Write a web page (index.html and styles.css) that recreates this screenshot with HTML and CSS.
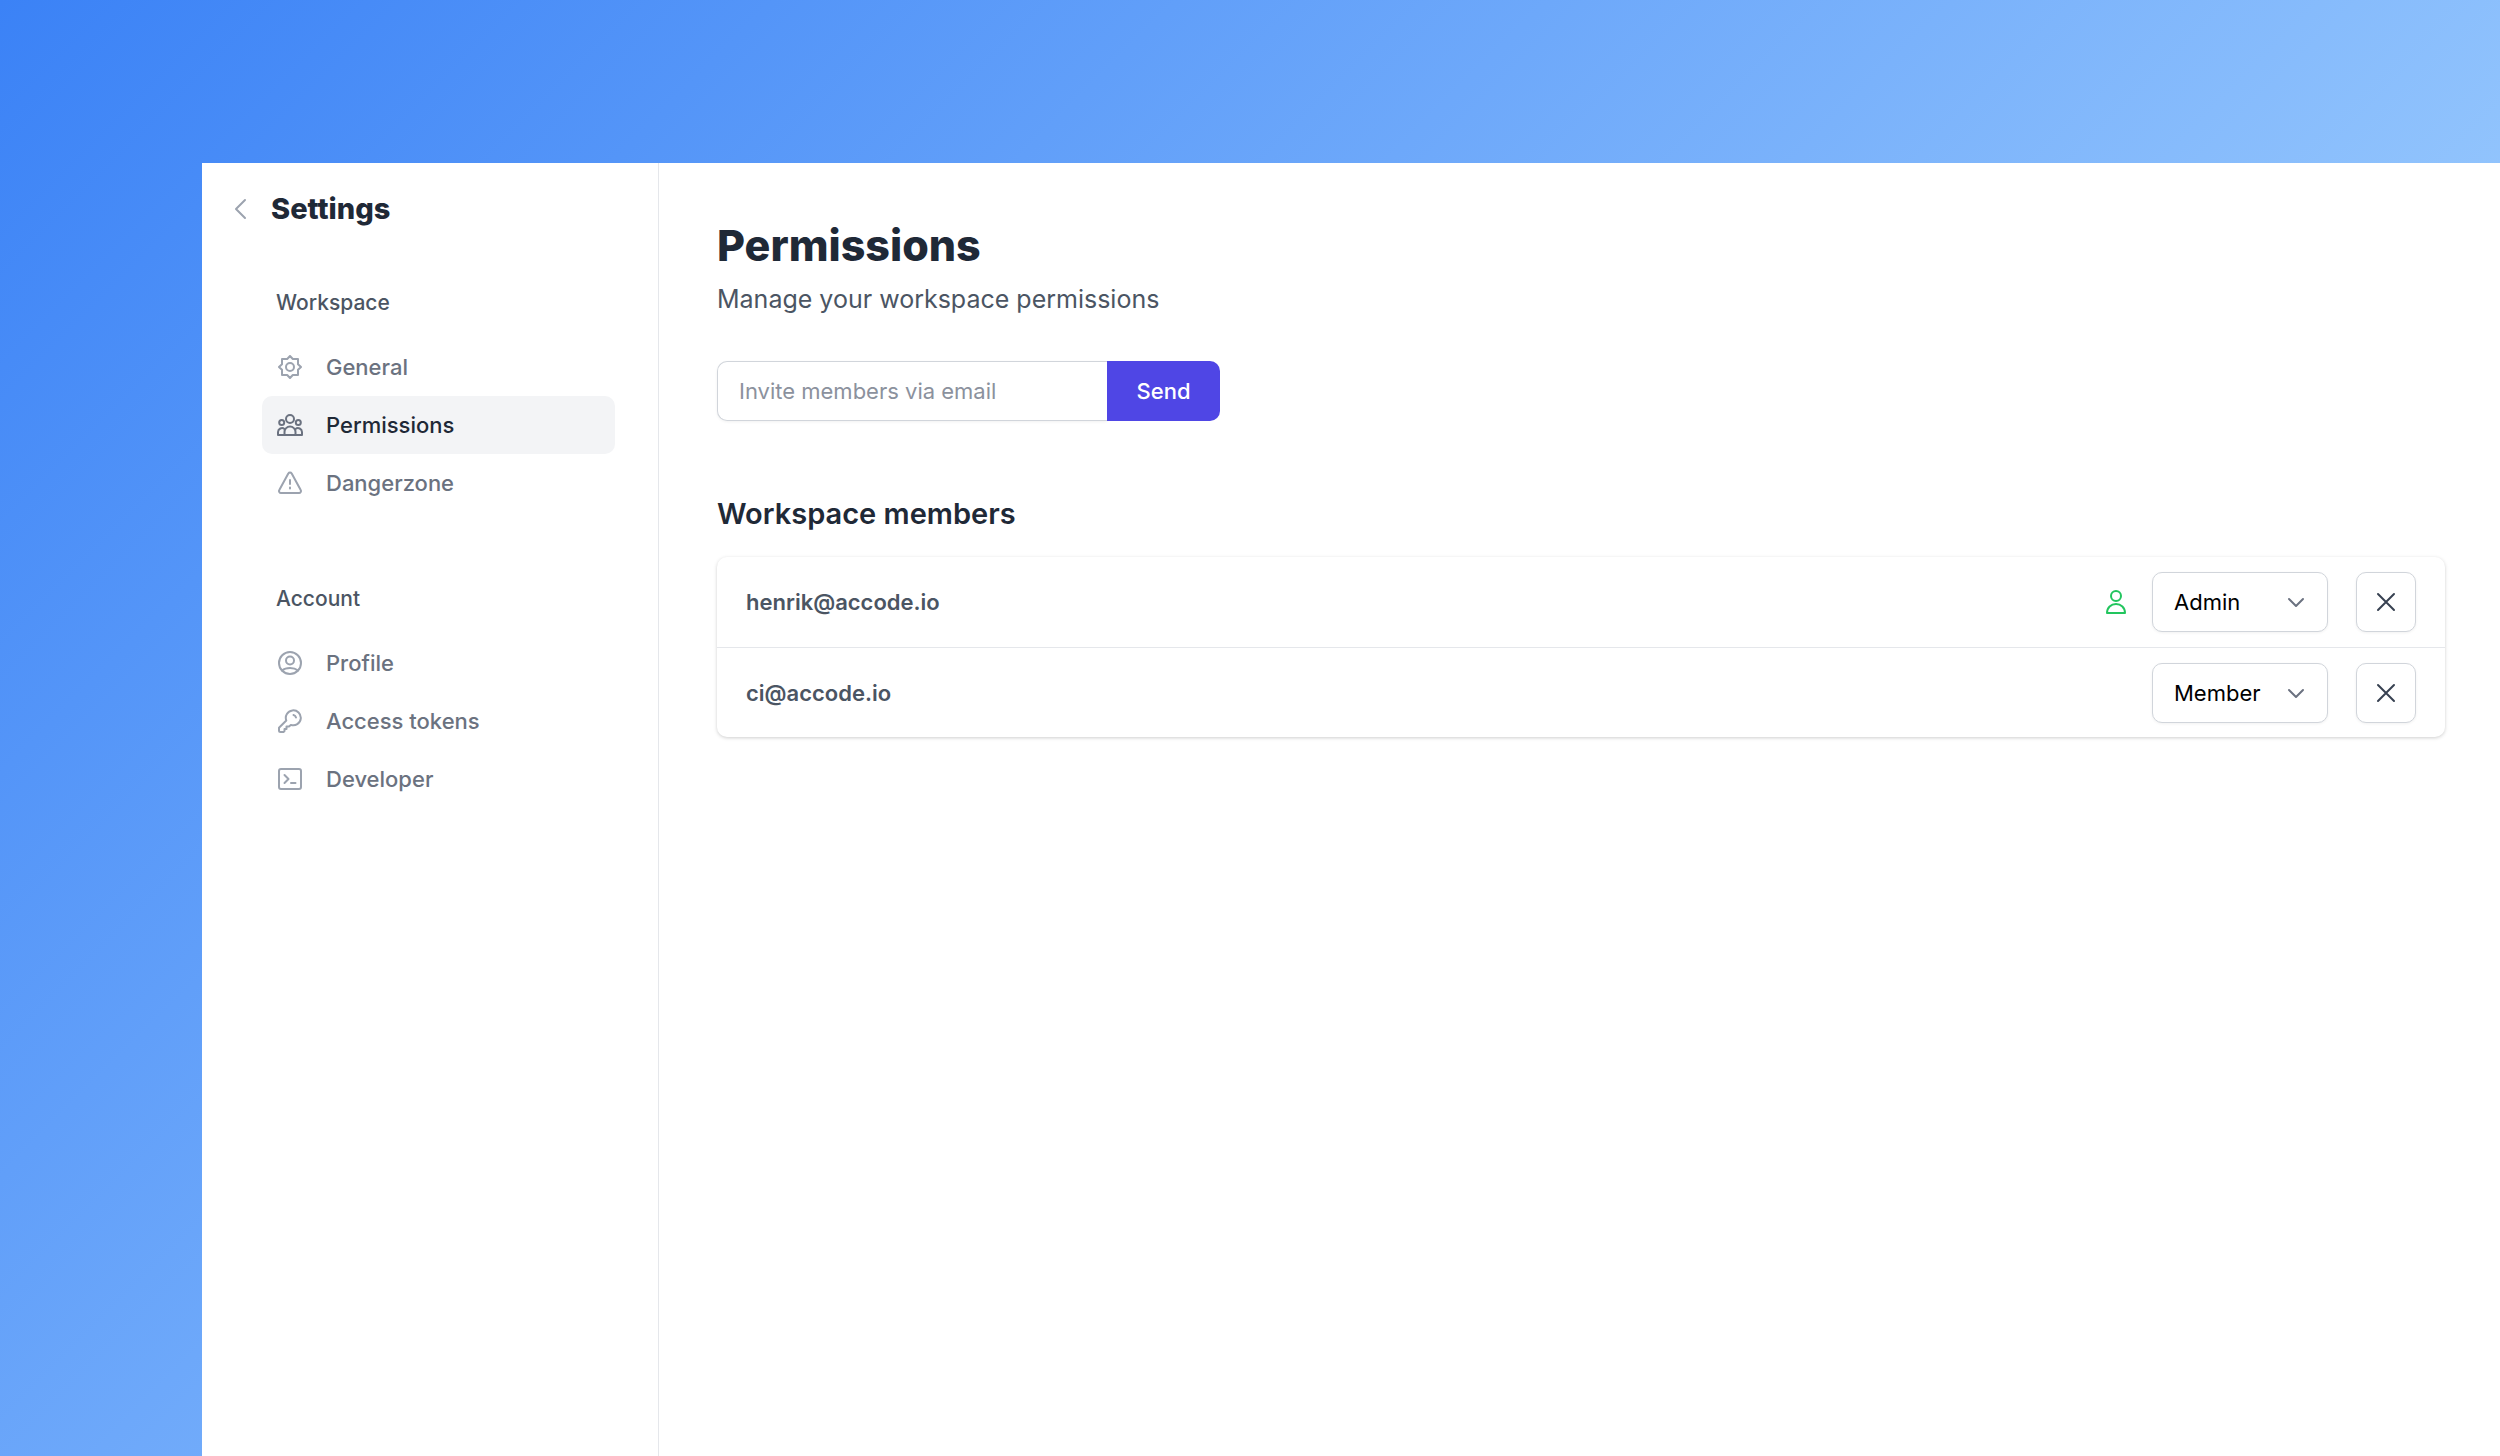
FILE: index.html
```html
<!DOCTYPE html>
<html lang="en">
<head>
    <meta charset="UTF-8">
    <meta name="viewport" content="width=device-width, initial-scale=1.0">
    <title>Settings - Permissions</title>
    <link rel="stylesheet" href="styles.css">
</head>
<body>
    <div class="app">
        <aside class="sidebar">
            <div class="sidebar-header">
                <a class="back" href="#" aria-label="Back">
                    <svg viewBox="0 0 24 24"><path d="M15 3 6 12l9 9" /></svg>
                </a>
                <h2>Settings</h2>
            </div>

            <nav class="menu">
                <h3>Workspace</h3>
                <a class="menu-item" href="#">
                    <svg viewBox="0 0 24 24">
                        <path d="M12 1l2.8 3H20v5.2l3 2.8-3 2.8V20h-5.2L12 23l-2.8-3H4v-5.2L1 12l3-2.8V4h5.2z" />
                        <circle cx="12" cy="12" r="4" />
                    </svg>
                    General
                </a>
                <a class="menu-item active" href="#">
                    <svg class="wide" viewBox="0 0 26 24">
                        <circle cx="13" cy="6" r="4" />
                        <circle cx="4.7" cy="9.5" r="2.5" />
                        <circle cx="21.3" cy="9.5" r="2.5" />
                        <path d="M7.5 22v-3a5.5 5.5 0 0 1 11 0v3z" />
                        <path d="M7.5 22H1v-3a4 4 0 0 1 6.5-3M18.5 22H25v-3a4 4 0 0 0-6.5-3" />
                    </svg>
                    Permissions
                </a>
                <a class="menu-item" href="#">
                    <svg viewBox="0 0 24 24">
                        <path d="M10.3 2.5a2 2 0 0 1 3.4 0l9 16.5a2 2 0 0 1-1.7 3H3a2 2 0 0 1-1.7-3z" />
                        <path d="M12 9v4M12 16.5v1" />
                    </svg>
                    Dangerzone
                </a>
            </nav>

            <nav class="menu">
                <h3>Account</h3>
                <a class="menu-item" href="#">
                    <svg viewBox="0 0 24 24">
                        <circle cx="12" cy="12" r="11" />
                        <circle cx="12" cy="9.5" r="4" />
                        <path d="M4 19.5c4-3.3 12-3.3 16 0" />
                    </svg>
                    Profile
                </a>
                <a class="menu-item" href="#">
                    <svg viewBox="0 0 24 24">
                        <path d="M8.3 11.5a7.5 7.5 0 1 1 4.5 4.4L11 17.5H8.5V20h-2v2l-1 1h-3A1.5 1.5 0 0 1 1 21.5v-2.7z" />
                        <path d="M15.5 6q2 .5 2.5 2.5" />
                    </svg>
                    Access tokens
                </a>
                <a class="menu-item" href="#">
                    <svg viewBox="0 0 24 24">
                        <rect x="1" y="2" width="22" height="20" rx="2" />
                        <path d="m6.5 8 4 4-4 4M13 16h4.5" />
                    </svg>
                    Developer
                </a>
            </nav>
        </aside>

        <main class="content">
            <h1>Permissions</h1>
            <p class="subtitle">Manage your workspace permissions</p>

            <form class="invite">
                <input type="email" placeholder="Invite members via email" aria-label="Invite members via email">
                <button type="submit">Send</button>
            </form>

            <h2>Workspace members</h2>
            <ul class="members">
                <li>
                    <span class="email">henrik@accode.io</span>
                    <svg class="you" viewBox="0 0 24 24">
                        <circle cx="12" cy="6" r="5" />
                        <path d="M3 23c0-5.5 4-9 9-9s9 3.5 9 9z" />
                    </svg>
                    <div class="select">
                        <select aria-label="Role of henrik@accode.io">
                            <option selected>Admin</option>
                            <option>Member</option>
                        </select>
                        <svg viewBox="0 0 24 24"><path d="m5 9 7 7 7-7" /></svg>
                    </div>
                    <button type="button" class="remove" aria-label="Remove henrik@accode.io">
                        <svg viewBox="0 0 24 24"><path d="m4 4 16 16M20 4 4 20" /></svg>
                    </button>
                </li>
                <li>
                    <span class="email">ci@accode.io</span>
                    <div class="select">
                        <select aria-label="Role of ci@accode.io">
                            <option>Admin</option>
                            <option selected>Member</option>
                        </select>
                        <svg viewBox="0 0 24 24"><path d="m5 9 7 7 7-7" /></svg>
                    </div>
                    <button type="button" class="remove" aria-label="Remove ci@accode.io">
                        <svg viewBox="0 0 24 24"><path d="m4 4 16 16M20 4 4 20" /></svg>
                    </button>
                </li>
            </ul>
        </main>
    </div>
</body>
</html>
```

FILE: styles.css
```css
* {
    box-sizing: border-box;
}
body {
    font-family: Inter, "Liberation Sans", sans-serif;
    font-size: 22px;
    line-height: 32px;
    display: flex;
    min-height: 100vh;
    margin: 0;
    padding: 163px 0 0 202px;
    color: #4b5563;
    background: linear-gradient(135deg, #3b82f6, #93c5fd 69%);
}
h1, h2, h3, p, ul {
    margin: 0;
    padding: 0;
}
input, select, button {
    font: inherit;
}
svg {
    display: block;
    width: 24px;
    height: 24px;
    fill: none;
    stroke: currentColor;
    stroke-width: 2;
    stroke-linecap: round;
    stroke-linejoin: round;
}
.app {
    display: flex;
    flex: 1;
    background: white;
}

/* Sidebar */
.sidebar {
    flex: none;
    width: 457px;
    padding: 28px 43px 0 28px;
    border-right: 1px solid #e5e7eb;
}
.sidebar-header {
    display: flex;
    align-items: center;
    gap: 17px;
    height: 36px;
    margin-bottom: 60px;
}
.sidebar-header h2 {
    font-size: 29px;
    font-weight: 800;
    color: #1f2937;
}
.back {
    color: #9ca3af;
}
.menu {
    margin: 0 0 71px 32px;
}
.menu h3 {
    margin: 0 0 19px 14px;
    font-size: 21px;
    font-weight: 500;
}
.menu-item {
    display: flex;
    align-items: center;
    gap: 24px;
    height: 58px;
    padding: 0 16px;
    border-radius: 10px;
    font-weight: 500;
    color: #6b7280;
    text-decoration: none;
}
.menu-item svg {
    color: #9ca3af;
}
.menu-item svg.wide {
    width: 26px;
    margin: 0 -1px;
}
.menu-item.active {
    color: #1f2937;
    background: #f3f4f6;
}
.menu-item.active svg {
    color: #6b7280;
}

/* Main content */
.content {
    flex: 1;
    padding: 57px 55px 57px 58px;
}
.content h1 {
    font-size: 43px;
    line-height: 50px;
    font-weight: 800;
    color: #1f2937;
}
.subtitle {
    margin-top: 13px;
    font-size: 25px;
}
.invite {
    display: flex;
    width: 503px;
    height: 60px;
    margin: 46px 0 77px;
}
.invite input {
    flex: 1;
    min-width: 0;
    padding: 0 21px;
    border: 1px solid #d1d5db;
    border-right: none;
    border-radius: 10px 0 0 10px;
    box-shadow: 0 1px 3px rgba(0, 0, 0, 0.06);
}
.invite input::placeholder {
    color: #8b919d;
}
.invite button {
    width: 113px;
    border: none;
    border-radius: 0 10px 10px 0;
    font-weight: 500;
    color: white;
    background: #4f46e5;
}
.content h2 {
    font-size: 29px;
    font-weight: 600;
    color: #1f2937;
}

/* Members */
.members {
    margin-top: 27px;
    list-style: none;
    border-radius: 10px;
    box-shadow: 0 1px 4px rgba(0, 0, 0, 0.12), 0 1px 3px rgba(0, 0, 0, 0.08);
}
.members li {
    display: flex;
    align-items: center;
    height: 90px;
    padding: 0 29px;
}
.members li + li {
    border-top: 1px solid #e5e7eb;
}
.email {
    flex: 1;
    font-weight: 600;
}
.you {
    margin-right: 24px;
    color: #22c55e;
}
.select {
    position: relative;
    margin-right: 28px;
}
.select select {
    display: block;
    width: 176px;
    height: 60px;
    padding: 0 21px;
    border: 1px solid #d1d5db;
    border-radius: 10px;
    color: black;
    background: white;
    box-shadow: 0 1px 3px rgba(0, 0, 0, 0.06);
    appearance: none;
}
.select svg {
    position: absolute;
    top: 18px;
    right: 20px;
    color: #6b7280;
    pointer-events: none;
}
.remove {
    display: flex;
    align-items: center;
    justify-content: center;
    width: 60px;
    height: 60px;
    padding: 0;
    border: 1px solid #d1d5db;
    border-radius: 10px;
    color: #374151;
    background: white;
    box-shadow: 0 1px 3px rgba(0, 0, 0, 0.06);
}
```
